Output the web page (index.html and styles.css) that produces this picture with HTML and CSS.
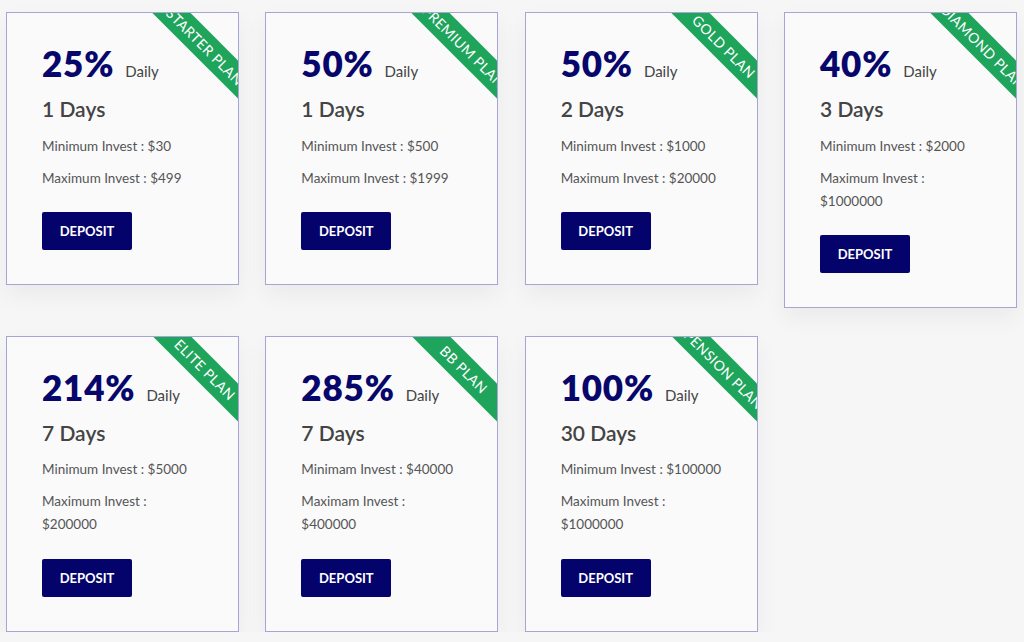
FILE: index.html
```html
<!DOCTYPE html>
<html lang="en">
<head>
<meta charset="utf-8">
<title>Investment Plans</title>
<link rel="stylesheet" href="styles.css">
</head>
<body>
<main class="plans">
  <div class="card">
    <div class="ribbon">STARTER PLAN</div>
    <div class="rate-row"><span class="rate">25%</span><span class="period">Daily</span></div>
    <h3 class="days">1 Days</h3>
    <p class="line">Minimum Invest : $30</p>
    <p class="line">Maximum Invest : $499</p>
    <a class="btn" href="#">DEPOSIT</a>
  </div>
  <div class="card">
    <div class="ribbon">PREMIUM PLAN</div>
    <div class="rate-row"><span class="rate">50%</span><span class="period">Daily</span></div>
    <h3 class="days">1 Days</h3>
    <p class="line">Minimum Invest : $500</p>
    <p class="line">Maximum Invest : $1999</p>
    <a class="btn" href="#">DEPOSIT</a>
  </div>
  <div class="card">
    <div class="ribbon">GOLD PLAN</div>
    <div class="rate-row"><span class="rate">50%</span><span class="period">Daily</span></div>
    <h3 class="days">2 Days</h3>
    <p class="line">Minimum Invest : $1000</p>
    <p class="line">Maximum Invest : $20000</p>
    <a class="btn" href="#">DEPOSIT</a>
  </div>
  <div class="card">
    <div class="ribbon">DIAMOND PLAN</div>
    <div class="rate-row"><span class="rate">40%</span><span class="period">Daily</span></div>
    <h3 class="days">3 Days</h3>
    <p class="line">Minimum Invest : $2000</p>
    <p class="line">Maximum Invest : $1000000</p>
    <a class="btn" href="#">DEPOSIT</a>
  </div>
  <div class="card">
    <div class="ribbon">ELITE PLAN</div>
    <div class="rate-row"><span class="rate">214%</span><span class="period">Daily</span></div>
    <h3 class="days">7 Days</h3>
    <p class="line">Minimum Invest : $5000</p>
    <p class="line">Maximum Invest : $200000</p>
    <a class="btn" href="#">DEPOSIT</a>
  </div>
  <div class="card">
    <div class="ribbon">BB PLAN</div>
    <div class="rate-row"><span class="rate">285%</span><span class="period">Daily</span></div>
    <h3 class="days">7 Days</h3>
    <p class="line">Minimam Invest : $40000</p>
    <p class="line">Maximam Invest : $400000</p>
    <a class="btn" href="#">DEPOSIT</a>
  </div>
  <div class="card">
    <div class="ribbon">PENSION PLAN</div>
    <div class="rate-row"><span class="rate">100%</span><span class="period">Daily</span></div>
    <h3 class="days">30 Days</h3>
    <p class="line">Minimum Invest : $100000</p>
    <p class="line">Maximum Invest : $1000000</p>
    <a class="btn" href="#">DEPOSIT</a>
  </div>
</main>
</body>
</html>
```

FILE: styles.css
```css
* { box-sizing: border-box; }

html, body {
  margin: 0;
  padding: 0;
}

body {
  background: #f6f6f7;
  font-family: "Lato", "Noto Sans", "Liberation Sans", sans-serif;
  color: #4a4a4a;
}

.plans {
  display: grid;
  grid-template-columns: repeat(4, 1fr);
  column-gap: 26.33px;
  row-gap: 28px;
  align-items: start;
  padding: 12px 7px 0 6px;
}

.card {
  position: relative;
  overflow: hidden;
  background: #fafafb;
  border: 1px solid #a6a6d4;
  box-shadow: 0 10px 22px rgba(0, 0, 0, 0.05);
  padding: 30px 35px 34px 35px;
}

.ribbon {
  position: absolute;
  top: 19.5px;
  right: -47px;
  width: 160px;
  height: 27px;
  line-height: 27px;
  background: #1fa45c;
  color: #ffffff;
  font-size: 14px;
  letter-spacing: 0.4px;
  text-align: center;
  transform: rotate(45deg);
  white-space: nowrap;
}

.rate-row {
  display: flex;
  align-items: baseline;
  gap: 11px;
  height: 40px;
  line-height: 40px;
}

.rate {
  font-size: 35px;
  font-weight: 800;
  letter-spacing: 0.8px;
  color: #07076b;
}

.period {
  font-size: 15px;
  color: #444;
}

.days {
  margin: 12px 0 0 0;
  font-size: 21px;
  line-height: 28px;
  font-weight: 600;
  color: #444;
}

.line {
  margin: 11.5px 0 0 0;
  font-size: 13.5px;
  line-height: 23px;
  color: #555;
}

.line + .line {
  margin-top: 9px;
}

.btn {
  display: inline-flex;
  align-items: center;
  justify-content: center;
  margin-top: 22.3px;
  width: 90px;
  height: 38px;
  background: #03036b;
  color: #fff;
  font-size: 13px;
  font-weight: 700;
  text-decoration: none;
  border-radius: 2px;
}
```
